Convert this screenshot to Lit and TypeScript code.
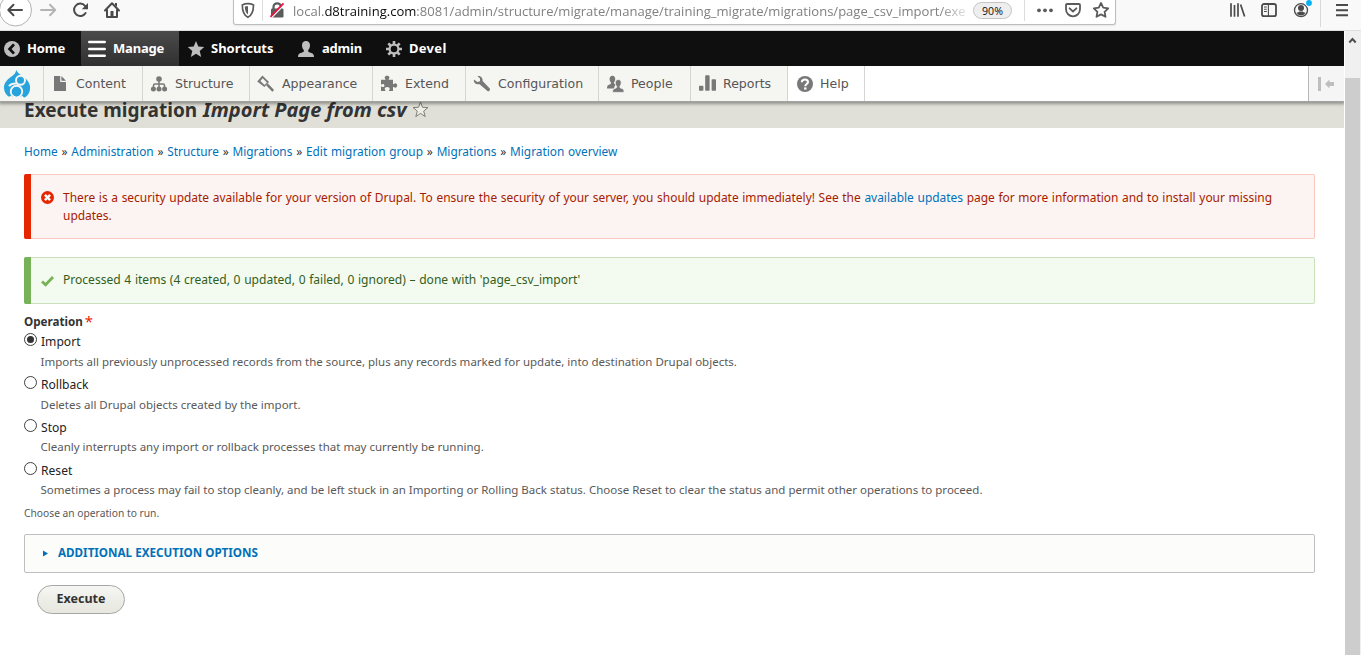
import { LitElement, html, css, svg, nothing } from "lit";
import type { SVGTemplateResult } from "lit";
import { customElement, property, state } from "lit/decorators.js";
import { classMap } from "lit/directives/class-map.js";

const ICONS: Record<string, SVGTemplateResult> = {
  back: svg`<circle cx="8" cy="8" r="8" fill="#bebebe"/><path d="M10 3.400 5.600 8l4.400 4.600" fill="none" stroke="#0f0f0f" stroke-width="2.800"/>`,
  burger: svg`<path d="M1.300 1.500h15.400M1.300 8.500h15.400M1.300 15.200h15.400" transform="translate(0 -.5)" stroke="#fff" stroke-width="2.600" stroke-linecap="round"/>`,
  star: svg`<path d="M8 0l2.300 5.600 5.900.4-4.500 3.900 1.500 6L8 12.700 2.800 15.900l1.500-6L-.2 6l5.900-.4z" fill="#bebebe"/>`,
  person: svg`<path d="M8 0c2.600 0 4 1.700 4 4.200 0 2-.8 4-1.900 5 0 1.600.6 1.900 2.400 2.600 2.300.8 3.500 1.400 3.500 4.200H0c0-2.800 1.200-3.400 3.500-4.200 1.800-.7 2.400-1 2.400-2.600C4.800 8.200 4 6.200 4 4.200 4 1.700 5.400 0 8 0z" fill="#bebebe"/>`,
  gear: svg`<g stroke="#bebebe" fill="none"><circle cx="8" cy="8" r="4.400" stroke-width="2.200"/><path d="M8 0v3M8 13v3M0 8h3M13 8h3M2.300 2.300l2.200 2.200M11.500 11.500l2.200 2.200M2.300 13.700l2.200-2.200M11.500 4.500l2.200-2.200" stroke-width="2.600"/></g>`,
  content: svg`<path d="M2 0h6.200v6H14v9H2zM9.400 0L14 4.800H9.400z" fill="#787878"/>`,
  structure: svg`<path d="M8 4v8M2.500 12V9.400Q2.500 8 4 8h8q1.500 0 1.500 1.400V12" fill="none" stroke="#787878" stroke-width="1.500"/><g fill="#787878"><circle cx="8" cy="3" r="2.800"/><circle cx="2.400" cy="13" r="2.500"/><circle cx="8" cy="13" r="2.500"/><circle cx="13.600" cy="13" r="2.500"/></g>`,
  appearance: svg`<path d="M-.8 5.500L4.400-.6 11 6 6.400 11z" fill="#787878"/><path d="M4.700 2.300L8.900 6.400 6.500 9 2.400 4.900z" fill="#f5f5f2"/><path d="M9 8.300l6.200 6.500" stroke="#787878" stroke-width="2.500"/>`,
  extend: svg`<path d="M0 3.800h4.600C4.600 2.900 3.700 2.700 3.700 1.600 3.700.4 4.800-.2 6-.2s2.400.6 2.400 1.800C8.400 2.700 7.500 2.900 7.500 3.800H12v4.400c1 0 1.300-.9 2.300-.9 1.100 0 1.900 1 1.900 2.200s-.8 2.200-1.900 2.200c-1 0-1.300-.9-2.300-.9V15H8c0-1 .7-1.300.7-2.200 0-1.200-1-1.900-2.500-1.900s-2.500.7-2.500 1.900c0 .9.700 1.200.7 2.200H0v-4.500c1 0 1.300.6 2 .6.900 0 1.400-.7 1.400-1.600S2.900 7.900 2 7.900c-.7 0-1 .6-2 .6z" fill="#787878"/>`,
  config: svg`<path d="M0 3.500L3.300 6 6 5.300V2.500L3.300 0C6-.6 9 1.300 8.600 5l7.200 7.600c1 1.200-.9 3.600-2.400 2.500L5.600 8.200C2 8.900-.9 6.500 0 3.500z" fill="#787878"/>`,
  people: svg`<path d="M5.400-.2C7.300-.2 8.200 1.200 8.200 3c0 1.500-.5 2.700-1.300 3.500C6.900 8 8.300 8 8.800 8.700 8 9.500 7.300 10 7.100 12.400H0c0-2.900 1-3.300 2.600-3.900C3.800 8.100 4 7.600 4 6.500 3.100 5.700 2.600 4.500 2.600 3 2.600 1.200 3.500-.2 5.400-.2z" fill="#787878"/><path d="M11.200 3.500c2 0 3 1.400 3 3.200 0 1.500-.5 3-1.400 3.800 0 1 .2 1.300 1.400 1.700 1.900.6 2.900 1.200 2.900 4.200H5.500c0-3 .9-3.600 2.900-4.200 1.200-.4 1.400-.7 1.400-1.700-.9-.8-1.500-2.300-1.500-3.800 0-1.800 1-3.200 2.900-3.200z" fill="#787878" stroke="#f5f5f2" stroke-width=".8"/>`,
  reports: svg`<path d="M.8 9.800h2.800q.8 0 .8.800V14q0 .8-.8.800H.8Q0 14.800 0 14v-3.400q0-.8.8-.8zM7-.8h2.800q.8 0 .8.800v14q0 .8-.8.800H7q-.8 0-.8-.8V0q0-.8.8-.8zM13.400 3.200h2.800q.8 0 .8.800v10q0 .8-.8.800h-2.800q-.8 0-.8-.8V4q0-.8.800-.8z" fill="#787878"/>`,
  help: svg`<circle cx="8" cy="8" r="8" fill="#787878"/><path d="M4.800 6.200C5 2.500 11 2.600 11 6c0 2-2.700 2-2.700 4.200" fill="none" stroke="#fff" stroke-width="2.100"/><path d="M7.100 11.400h2.400v2.200H7.100z" fill="#fff"/>`,
};
const icon = (name: string, size = 16) =>
  html`<svg width=${size} height="16" viewBox="0 0 ${size} 16" overflow="visible">${ICONS[name]}</svg>`;

/* A slice of the browser bar, drawn in the bar's own coordinates. */
const slice = (x: number, w: number, art: SVGTemplateResult) =>
  html`<svg width=${w} height="30" viewBox="${x} 0 ${w} 30">${art}</svg>`;

@customElement("browser-bar")
export class BrowserBar extends LitElement {
  static styles = css`
    :host { display: flex; height: 31px; background: #f9f9fa; border-bottom: 1px solid #dededf; box-sizing: border-box; }
    svg { display: block; flex: none; }
    .url { box-sizing: border-box; flex: none; display: flex; width: 883px; height: 25px; background: #fff; border: 1px solid #bdbdbd; border-top: 0; border-radius: 0 0 3px 3px; box-shadow: 0 1px 2px rgba(0,0,0,.08); }
    .address { flex: none; box-sizing: border-box; width: 680px; padding-left: 1px; height: 22px; overflow: hidden; white-space: nowrap; font: 13.050px/22px "Open Sans", sans-serif; color: #808080;
      -webkit-mask-image: linear-gradient(90deg, #000 647px, rgba(0,0,0,.15) 676px); mask-image: linear-gradient(90deg, #000 647px, rgba(0,0,0,.15) 676px); }
    .address b { font-weight: 400; color: #0c0c0d; }
    .zoom { box-sizing: border-box; flex: none; width: 39px; height: 17px; margin: 2px 11px 0 1px; border: 1px solid #c4c4c4; border-radius: 9px; background: #eeeeef; color: #0c0c0d; text-align: center; font: 10.600px/16px "Open Sans", sans-serif; }
  `;
  render() {
    return html`
      ${slice(0, 233, svg`
        <circle cx="15.500" cy="10" r="16" fill="#fff" stroke="#b3b3b4"/>
        <g fill="none" stroke="#4a4a4b" stroke-width="2" stroke-linecap="round" stroke-linejoin="round">
          <path d="M22 10H8.500M13.500 4.800L8.300 10l5.200 5.200"/>
          <path stroke="#b4b4b5" d="M41 10h13.500M50 4.800l5.200 5.200-5.200 5.200"/>
          <path d="M85.600 13A6.200 6.200 0 1 1 85 5.800"/>
          <path d="M105 10.500l7-7.300 7 7.300M107 10v7h10v-7"/>
        </g>
        <path d="M88 3v6.200h-6.200z" fill="#4a4a4b"/><path d="M110.500 11h3v6h-3zM115 3h2v4l-2-2z" fill="#4a4a4b"/>`)}
      <div class="url">
        ${slice(234, 58, svg`
          <path d="M247.900 3.700c2.300 0 4.200.5 5.600 1.200 0 6-1 10-5.600 12.400-4.600-2.400-5.600-6.400-5.600-12.400 1.400-.7 3.300-1.200 5.600-1.200z" fill="none" stroke="#5b5b5c" stroke-width="1.700"/>
          <path d="M248 6.200v8.400c-2.400-1.700-3.100-4.200-3.200-8 1-.3 2-.4 3.200-.4z" fill="#5b5b5c"/>
          <path d="M262.500 0v21" stroke="#dcdcdc"/>
          <path d="M273.500 9V7a3.700 3.700 0 0 1 7.400 0v2" fill="none" stroke="#5b5b5c" stroke-width="2.200"/>
          <rect x="271" y="8.500" width="12.500" height="9" rx="1.300" fill="#5b5b5c"/>
          <path d="M271.400 17.800L284.400 4.400" stroke="#fff" stroke-width="1.500"/><path d="M270.500 16.800L283.500 3.400" stroke="#ed1140" stroke-width="1.800"/>`)}
        <div class="address">local.<b>d8training.com</b>:8081/admin/structure/migrate/manage/training_migrate/migrations/page_csv_import/exe</div>
        <div class="zoom">90%</div>
        ${slice(1023, 91, svg`
          <path d="M1024.500 0v21" stroke="#dcdcdc"/>
          <g fill="#5b5b5c"><circle cx="1039" cy="10.300" r="1.900"/><circle cx="1045" cy="10.300" r="1.900"/><circle cx="1051" cy="10.300" r="1.900"/></g>
          <g fill="none" stroke="#5b5b5c" stroke-width="1.800" stroke-linejoin="round" stroke-linecap="round">
            <path d="M1067 4h12q1 0 1 1v4.300a7 7 0 0 1-14 0V5q0-1 1-1z"/><path d="M1069.600 8.300l3.400 3.200 3.400-3.200"/>
            <path d="M1101 3l2.200 4.600 5 .7-3.600 3.500.9 5-4.500-2.400-4.500 2.400.9-5-3.600-3.500 5-.7z"/>
          </g>`)}
      </div>
      ${slice(1116, 245, svg`
        <path d="M1231 3.300v13.400M1234.500 5v11.700M1238 3.300v13.400M1240.600 4.500l4 12" stroke="#4a4a4b" stroke-width="1.700" fill="none"/>
        <rect x="1262" y="4" width="14" height="12.200" rx="2" fill="none" stroke="#4a4a4b" stroke-width="1.800"/>
        <path d="M1268.400 4v12M1264 7h2.800M1264 9.300h2.800M1264 11.500h2.800" stroke="#4a4a4b" stroke-width="1.100"/>
        <circle cx="1301" cy="10.200" r="6.500" fill="none" stroke="#4a4a4b" stroke-width="1.300"/>
        <circle cx="1301" cy="8" r="3" fill="#4a4a4b"/><path d="M1296.600 12.200c1 .6 2 .2 2.600-.6h3.600c.6.800 1.600 1.200 2.600.6-.6 2.300-2.200 3.300-4.400 3.300s-3.800-1-4.400-3.300z" fill="#4a4a4b"/>
        <circle cx="1309" cy="3" r="3.600" fill="#f9f9fa"/><circle cx="1309" cy="3" r="2.900" fill="#00b3f4"/>
        <path d="M1320.500 0v27" stroke="#d9d9da"/>
        <path d="M1336 5h12M1336 10.200h12M1336 15.200h12" stroke="#4a4a4b" stroke-width="1.900"/>`)}
    `;
  }
}

@customElement("admin-toolbar")
export class AdminToolbar extends LitElement {
  static styles = css`
    :host { display: block; position: relative; z-index: 1; box-shadow: 0 1px 3px 1px rgba(0,0,0,.35); clip-path: inset(0 0 -8px 0); }
    * { box-sizing: border-box; }
    svg { display: block; flex: none; }
    .bar { display: flex; height: 35px; background: #0f0f0f; font: 700 13px/35px "Noto Sans", sans-serif; color: #fff; white-space: nowrap; }
    .tab { display: flex; align-items: center; gap: 7px; padding-left: 8px; }
    .active { background: linear-gradient(#4b4b4b, #303030); padding-left: 7px; }
    .home { width: 81px; padding-left: 4px; } .manage { width: 98px; letter-spacing: -.2px; } .shortcuts { width: 111px; padding-left: 9px; } .admin { width: 88px; gap: 8px; letter-spacing: -.2px; }
    .devel { letter-spacing: .3px; }
    .home { letter-spacing: -.1px; }
    .tray { display: flex; height: 36px; background: #fff; border-bottom: 1px solid #a2a2a0; font: 12.550px/35px "DejaVu Sans", sans-serif; color: #565656; white-space: nowrap; }
    .item { display: flex; align-items: center; gap: 8px; padding-left: 8px; background: #f5f5f2; border-right: 1px solid #d5d5d3; }
    .logo { width: 44px; padding-left: 4px; }
    .content { width: 99px; } .structure { width: 107px; } .appearance { width: 123px; } .extend { width: 93px; } .config { width: 133px; }
    .people { width: 92px; } .reports { width: 97px; } .help { width: 77px; background: #fff; padding-left: 9px; gap: 7px; }
    .toggle { margin-left: auto; width: 36px; background: #f5f5f5; border-left: 1px solid #b8b8b8; display: flex; align-items: center; padding-left: 9px; }
  `;
  private tabs = [["home", "Home", "back"], ["manage", "Manage", "burger"], ["shortcuts", "Shortcuts", "star"], ["admin", "admin", "person"], ["devel", "Devel", "gear"]];
  private items = [["content", "Content"], ["structure", "Structure"], ["appearance", "Appearance"], ["extend", "Extend"], ["config", "Configuration"], ["people", "People"], ["reports", "Reports"], ["help", "Help"]];
  render() {
    return html`
      <div class="bar">
        ${this.tabs.map(([id, label, ic]) => html`<div class=${classMap({ tab: true, [id]: true, active: id === "manage" })}>${icon(ic, ic === "burger" ? 18 : 16)}<span>${label}</span></div>`)}
      </div>
      <div class="tray">
        <div class="item logo">
          <svg width="26" height="29" viewBox="0 0 26 29">
            <path d="M12.300.8C13.300 4.200 17 6 20 8.300c4 3 6.100 6.200 6.100 10.700 0 4.100-2.100 7.900-5.600 9.600L5.300 28C1.900 26 0 22.800 0 18.800 0 14 3 10.600 6.500 8.200 10 6 11.800 4.400 12.300.8z" fill="#27a3dd"/>
            <g fill="none" stroke="#f5f5f2" stroke-width="2">
              <circle cx="16.500" cy="11.300" r="4.500"/>
              <circle cx="12.500" cy="22.500" r="5.700"/>
              <path d="M5 17.200c1.800-2.300 4.200-3 8-2.600"/>
            </g>
            <path d="M3.500 29l3-2.200q6 3 12 0l1.500 2.200z" fill="#f5f5f2"/>
            <circle cx="12.500" cy="22.800" r="4.700" fill="#27a3dd"/>
          </svg>
        </div>
        ${this.items.map(([id, label]) => html`<div class="item ${id}">${icon(id)}<span>${label}</span></div>`)}
        <div class="toggle"><svg width="17" height="16" viewBox="0 0 17 16"><path d="M0 1h3v14H0zM7 8l4.500-4.500V6H16v4h-4.500v2.500z" fill="#bebebe"/></svg></div>
      </div>`;
  }
}

@customElement("status-message")
export class StatusMessage extends LitElement {
  @property() kind = "status";
  static styles = css`
    :host { display: block; }
    .box { box-sizing: border-box; display: flex; border: 1px solid; border-left: 0; border-radius: 2px; min-height: 47px; }
    .box::before { content: ""; flex: none; width: 7px; margin: -1px 0; border-radius: 2px 0 0 2px; background: var(--bar); }
    .error { --bar: #e62600; background: #fcf4f2; border-color: #f9c9bf; color: #a51b00; min-height: 65px; }
    .status { --bar: #77b259; background: #f3faef; border-color: #c9e1bd; color: #325e1c; }
    svg { display: block; flex: none; margin: 16px 9px 0 10px; }
    .text { padding-top: 13px; font: 11.940px/18px "Noto Sans", sans-serif; word-spacing: .55px; width: 1230px; }
    .status .text { font-size: 12.060px; }
    ::slotted(a) { color: #0071b8; }
  `;
  render() {
    return html`<div class="box ${this.kind}">
      ${this.kind === "error"
        ? html`<svg width="13" height="13" viewBox="0 0 13 13"><circle cx="6.500" cy="6.500" r="6.500" fill="#e62600"/><path d="M3.900 3.900l5.200 5.200M9.100 3.900L3.900 9.100" stroke="#fff" stroke-width="2.400"/></svg>`
        : html`<svg width="13" height="13" viewBox="0 0 13 13"><path d="M1 7.500l3.600 3.300L12 3" fill="none" stroke="#77b259" stroke-width="2.800"/></svg>`}
      <div class="text"><slot></slot></div></div>`;
  }
}

const CRUMBS = ["Home", "Administration", "Structure", "Migrations", "Edit migration group", "Migrations", "Migration overview"];
const OPERATIONS = [
  ["Import", "Imports all previously unprocessed records from the source, plus any records marked for update, into destination Drupal objects."],
  ["Rollback", "Deletes all Drupal objects created by the import."],
  ["Stop", "Cleanly interrupts any import or rollback processes that may currently be running."],
  ["Reset", "Sometimes a process may fail to stop cleanly, and be left stuck in an Importing or Rolling Back status. Choose Reset to clear the status and permit other operations to proceed."],
];

@customElement("app-root")
export class AppRoot extends LitElement {
  @state() private selected = "Import";
  static styles = css`
    :host { display: flex; flex-direction: column; width: 1361px; height: 655px; overflow: hidden; background: #fff; font: 12.100px/19px "Noto Sans", sans-serif; color: #333; }
    * { box-sizing: border-box; }
    a { color: #0071b8; text-decoration: none; }
    .view { display: flex; flex: 1; min-height: 0; }
    .page { width: 1344px; }
    .scroll { width: 16px; margin-left: 1px; background: #f0f0f0; display: flex; flex-direction: column; }
    .scroll svg { display: block; flex: none; }
    .thumb { flex: 1; width: 15px; background: #cdcdcd; }
    .title { display: flex; height: 26px; padding-left: 24px; margin: 0; background: #e0e0d8; font-size: 19px; font-weight: 700; line-height: 17px; white-space: pre; }
    .title em { font-size: 20px; line-height: 16px; margin-left: 1px; }
    .title svg { margin: 0 0 0 5px; display: block; }
    .main { padding: 14px 29px 0 24px; }
    .crumbs { margin-bottom: 13px; color: #333; white-space: nowrap; font-size: 11.840px; word-spacing: .75px; }
    .good { margin: 18px 0 8px; }
    .legend { font-size: 11.650px; font-weight: 700; }
    .legend b { color: #e62600; font-size: 15px; font-weight: 400; line-height: 10px; vertical-align: -1px; margin-left: 2px; }
    .op { height: 43px; display: grid; grid-template-columns: 16px auto; grid-template-rows: 20px 21px; white-space: nowrap; }
    .radio { width: 13px; height: 13px; border: 1px solid #3f3f3f; border-radius: 50%; margin-top: 2px; display: grid; place-items: center; background: #fff; }
    .on::after { content: ""; width: 7px; height: 7px; border-radius: 50%; background: #333; }
    .label { line-height: 22px; padding-left: 1px; color: #222; }
    .desc { grid-column: 2; line-height: 21px; padding-left: .5px; font-size: 11.500px; color: #595959; }
    .op:nth-of-type(n+3) .desc { line-height: 19px; }
    .hint { margin-top: 1px; line-height: 18px; font-size: 10.250px; color: #595959; }
    .details { margin-top: 12px; height: 39px; border: 1px solid #bfbfbf; border-radius: 2px; background: #fcfcfa; display: flex; align-items: center; padding: 0 0 0 18px; font-weight: 700; font-size: 11.650px; color: #0071b8; text-transform: uppercase; }
    .details span { margin-top: -2px; }
    .details svg { margin-right: 10px; }
    .button { margin: 12px 0 0 13px; padding: 0 0 2px; width: 88px; height: 29px; border: 1px solid #a6a6a6; border-radius: 15px; background: linear-gradient(#f6f6f3, #e7e7df); color: #333; font: 700 12.500px/24px "Noto Sans", sans-serif; display: block; }
  `;
  render() {
    return html`
      <browser-bar></browser-bar>
      <div class="view">
        <div class="page">
          <admin-toolbar></admin-toolbar>
          <h1 class="title"><span>Execute migration </span><em>Import Page from csv</em><svg width="17" height="17" viewBox="0 0 17 17"><path d="M8.500 0l2 5.300 5.500.2-4.300 3.600 1.500 5.500-4.700-3.200-4.700 3.200 1.500-5.500L1 5.500l5.500-.2z" fill="#eeeee8" stroke="#7d7d76" stroke-width="1"/></svg></h1>
          <div class="main">
            <div class="crumbs">${CRUMBS.map((c, i) => html`${i ? " » " : nothing}<a>${c}</a>`)}</div>
            <status-message kind="error">There is a security update available for your version of Drupal. To ensure the security of your server, you should update immediately! See the <a>available updates</a> page for more information and to install your missing updates.</status-message>
            <status-message class="good" kind="status">Processed 4 items (4 created, 0 updated, 0 failed, 0 ignored) – done with 'page_csv_import'</status-message>
            <div class="legend">Operation<b>*</b></div>
            <section>${OPERATIONS.map(([name, text]) => html`<div class="op" @click=${() => (this.selected = name)}>
              <i class=${classMap({ radio: true, on: this.selected === name })}></i><div class="label">${name}</div><div class="desc">${text}</div></div>`)}</section>
            <div class="hint">Choose an operation to run.</div>
            <div class="details"><svg width="5" height="7" viewBox="0 0 5 7"><path d="M0 .5l5 3-5 3z" fill="#0071b8"/></svg><span>Additional execution options</span></div>
            <button class="button">Execute</button>
          </div>
        </div>
        <div class="scroll">
          <svg width="16" height="47" viewBox="0 0 16 47"><path d="M4.300 11.500L7.500 8l3.200 3.500" fill="none" stroke="#4f4f4f" stroke-width="2"/></svg>
          <div class="thumb"></div>
        </div>
      </div>`;
  }
}
